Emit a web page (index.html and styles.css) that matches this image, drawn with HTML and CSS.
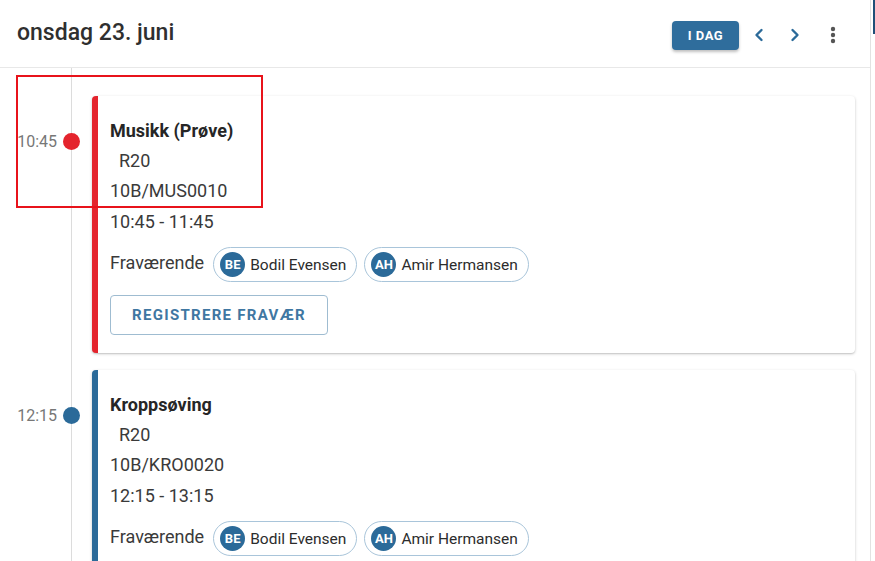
FILE: index.html
```html
<!DOCTYPE html>
<html lang="no">
<head>
  <meta charset="UTF-8">
  <meta name="viewport" content="width=device-width, initial-scale=1.0">
  <title>Timeplan</title>
  <link rel="stylesheet" href="styles.css">
</head>
<body>
  <div class="page">
    <div class="main">
      <header class="day-header">
        <h1 class="day-title">onsdag 23. juni</h1>
        <div class="day-actions">
          <button class="today-btn">I DAG</button>
          <button class="icon-btn" aria-label="Forrige">
            <svg width="16" height="16" viewBox="0 0 16 16"><polyline points="10.5,3 5.5,8 10.5,13" fill="none" stroke="#2b6a99" stroke-width="2.4" stroke-linecap="round" stroke-linejoin="round"/></svg>
          </button>
          <button class="icon-btn" aria-label="Neste">
            <svg width="16" height="16" viewBox="0 0 16 16"><polyline points="5.5,3 10.5,8 5.5,13" fill="none" stroke="#2b6a99" stroke-width="2.4" stroke-linecap="round" stroke-linejoin="round"/></svg>
          </button>
          <button class="icon-btn menu-btn" aria-label="Meny">
            <svg width="6" height="18" viewBox="0 0 6 18"><circle cx="3" cy="3" r="2.2" fill="#555"/><circle cx="3" cy="9" r="2.2" fill="#555"/><circle cx="3" cy="15" r="2.2" fill="#555"/></svg>
          </button>
        </div>
      </header>

      <div class="timeline">
        <div class="lesson">
          <div class="lesson-time">
            <span class="time-label">10:45</span>
            <span class="time-dot dot-red"></span>
          </div>
          <div class="lesson-card card-red">
            <div class="lesson-title">Musikk (Prøve)</div>
            <div class="lesson-line room">R20</div>
            <div class="lesson-line">10B/MUS0010</div>
            <div class="lesson-line">10:45 - 11:45</div>
            <div class="absent-row">
              <span class="absent-label">Fraværende</span>
              <span class="chip"><span class="avatar">BE</span>Bodil Evensen</span>
              <span class="chip"><span class="avatar">AH</span>Amir Hermansen</span>
            </div>
            <button class="register-btn">REGISTRERE FRAVÆR</button>
          </div>
        </div>

        <div class="lesson">
          <div class="lesson-time">
            <span class="time-label">12:15</span>
            <span class="time-dot dot-blue"></span>
          </div>
          <div class="lesson-card card-blue">
            <div class="lesson-title">Kroppsøving</div>
            <div class="lesson-line room">R20</div>
            <div class="lesson-line">10B/KRO0020</div>
            <div class="lesson-line">12:15 - 13:15</div>
            <div class="absent-row">
              <span class="absent-label">Fraværende</span>
              <span class="chip"><span class="avatar">BE</span>Bodil Evensen</span>
              <span class="chip"><span class="avatar">AH</span>Amir Hermansen</span>
            </div>
            <button class="register-btn">REGISTRERE FRAVÆR</button>
          </div>
        </div>
      </div>

      <div class="highlight-box"></div>
    </div>
    <div class="side-strip"></div>
  </div>
</body>
</html>
```

FILE: styles.css
```css
html, body {
  margin: 0;
  padding: 0;
  height: 100%;
  overflow: hidden;
}

body {
  font-family: Roboto, 'Liberation Sans', Arial, sans-serif;
  color: #333;
  background: #fff;
}

.page {
  display: flex;
  height: 100%;
}

.main {
  position: relative;
  width: 870px;
  border-right: 1px solid #e2e2e2;
}

.side-strip {
  flex: 1;
  background: linear-gradient(to bottom, #1f4f78 0, #1f4f78 34px, #fff 34px);
  margin-left: 2px;
}

.day-header {
  height: 68px;
  display: flex;
  align-items: center;
  justify-content: space-between;
  border-bottom: 1px solid #e8e8e8;
  padding: 0 23px 0 17px;
  box-sizing: border-box;
}

.day-title {
  margin: 0;
  font-size: 23px;
  font-weight: 500;
  color: #2f2f2f;
  position: relative;
  top: -1px;
}

.day-actions {
  display: flex;
  align-items: center;
  gap: 8px;
  padding-top: 3px;
}

.today-btn {
  background: #2f6d9c;
  color: #fff;
  border: none;
  border-radius: 4px;
  font-family: inherit;
  font-weight: 700;
  font-size: 13px;
  letter-spacing: 0.5px;
  width: 67px;
  height: 29px;
  box-shadow: 0 2px 3px rgba(0, 0, 0, 0.25);
  margin-right: -2px;
}

.icon-btn {
  background: none;
  border: none;
  width: 28px;
  height: 28px;
  padding: 0;
  display: flex;
  align-items: center;
  justify-content: center;
}

.menu-btn {
  margin-left: 2px;
}

.timeline {
  background: linear-gradient(to right, transparent 71px, #dcdcdc 71px, #dcdcdc 72px, transparent 72px);
  padding-top: 28px;
  display: flex;
  flex-direction: column;
  gap: 17px;
}

.lesson {
  display: flex;
}

.lesson-time {
  width: 92px;
  flex-shrink: 0;
  display: flex;
  align-items: center;
  justify-content: flex-end;
  align-self: flex-start;
  padding: 36px 12px 0 0;
  box-sizing: border-box;
  gap: 6px;
}

.time-label {
  font-size: 16px;
  color: #777;
}

.time-dot {
  width: 17px;
  height: 17px;
  border-radius: 50%;
}

.dot-red {
  background: #e4242d;
}

.dot-blue {
  background: #2b6a99;
}

.lesson-card {
  width: 763px;
  box-sizing: border-box;
  background: #fff;
  border-radius: 4px;
  border-left: 6px solid;
  box-shadow: 0 1px 3px rgba(0, 0, 0, 0.22), 0 1px 1px rgba(0, 0, 0, 0.06);
  padding: 20px 12px 18px 12px;
}

.card-red {
  border-left-color: #e4242d;
}

.card-blue {
  border-left-color: #2b6a99;
}

.lesson-title {
  font-size: 18px;
  font-weight: 700;
  line-height: 30px;
  color: #262626;
}

.lesson-line {
  font-size: 18px;
  line-height: 31px;
  color: #3a3a3a;
}

.room {
  line-height: 29px;
  padding-left: 9px;
}

.absent-row {
  display: flex;
  align-items: center;
  gap: 7px;
  margin-top: 10px;
}

.absent-label {
  font-size: 18px;
  color: #3a3a3a;
  margin-right: 2px;
  position: relative;
  top: -2px;
}

.chip {
  display: inline-flex;
  align-items: center;
  gap: 5px;
  height: 35px;
  box-sizing: border-box;
  border: 1px solid #a9c5da;
  border-radius: 18px;
  padding: 0 10px 0 6px;
  font-size: 15.5px;
  color: #2c2c2c;
}

.avatar {
  width: 25px;
  height: 25px;
  border-radius: 50%;
  background: #2b6a99;
  color: #fff;
  font-size: 13px;
  font-weight: 700;
  display: flex;
  align-items: center;
  justify-content: center;
}

.register-btn {
  margin-top: 13px;
  width: 218px;
  height: 40px;
  background: #fff;
  border: 1px solid #9fbcd1;
  border-radius: 4px;
  color: #3f77a2;
  font-family: inherit;
  font-weight: 700;
  font-size: 15px;
  letter-spacing: 1.3px;
}

.highlight-box {
  position: absolute;
  left: 16px;
  top: 75px;
  width: 247px;
  height: 133px;
  box-sizing: border-box;
  border: 2px solid #e8131b;
}
```
